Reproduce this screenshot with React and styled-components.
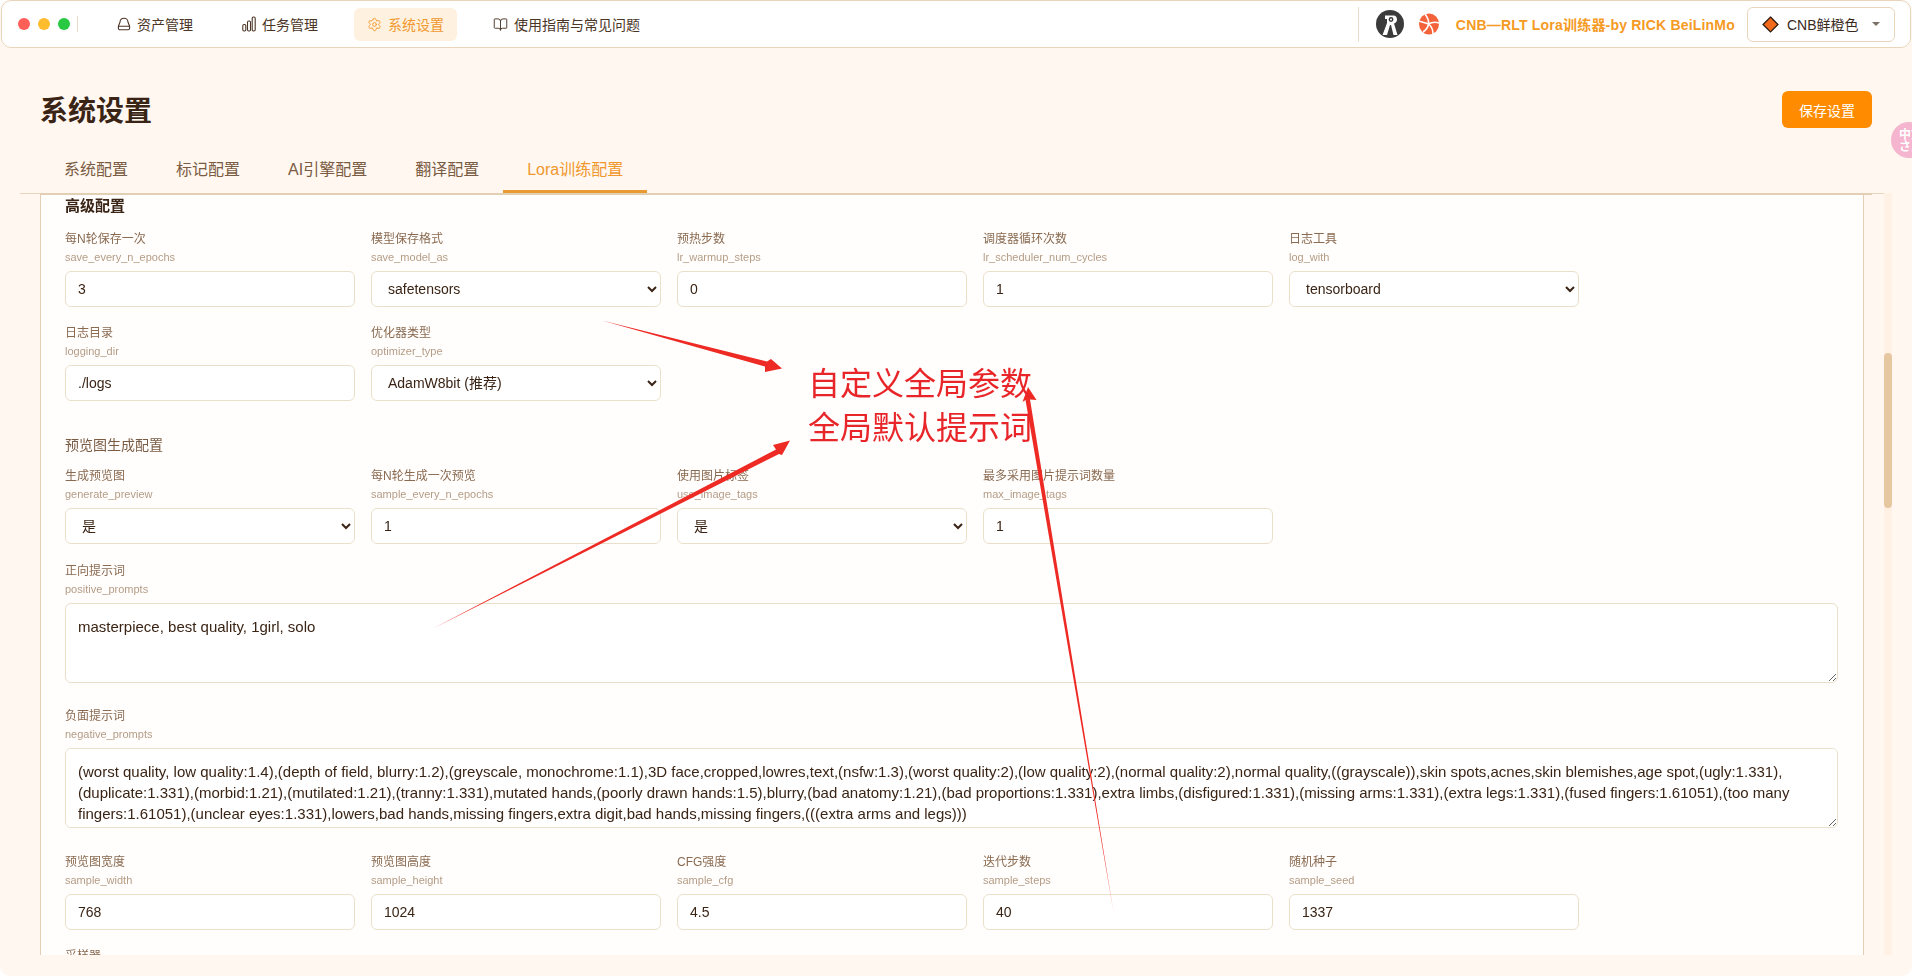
import React from 'react'
import styled, { createGlobalStyle } from 'styled-components'
import { Settings, BookOpen } from 'lucide-react'

const FONT = `"Liberation Sans", "Noto Sans CJK SC", sans-serif`

const NEGATIVE =
  '(worst quality, low quality:1.4),(depth of field, blurry:1.2),(greyscale, monochrome:1.1),3D face,cropped,lowres,text,(nsfw:1.3),(worst quality:2),(low quality:2),(normal quality:2),normal quality,((grayscale)),skin spots,acnes,skin blemishes,age spot,(ugly:1.331),(duplicate:1.331),(morbid:1.21),(mutilated:1.21),(tranny:1.331),mutated hands,(poorly drawn hands:1.5),blurry,(bad anatomy:1.21),(bad proportions:1.331),extra limbs,(disfigured:1.331),(missing arms:1.331),(extra legs:1.331),(fused fingers:1.61051),(too many fingers:1.61051),(unclear eyes:1.331),lowers,bad hands,missing fingers,extra digit,bad hands,missing fingers,(((extra arms and legs)))'

function DriveIcon() {
  return (
    <svg width="14" height="14" viewBox="0 0 14 14" fill="none" stroke="currentColor" strokeWidth="1.1">
      <path d="M3 5.2C3 2.8 4.4 1.2 6.9 1.2S11 2.8 11 5.2L12.6 9.2V11.2C12.6 12.1 12 12.7 11.1 12.7H2.9C2 12.7 1.4 12.1 1.4 11.2V9.2Z" />
      <path d="M1.4 9.2H12.6" />
    </svg>
  )
}

function BarsIcon() {
  return (
    <svg width="14" height="16" viewBox="0 0 14 16" fill="none" stroke="currentColor" strokeWidth="1.1">
      <rect x="0.8" y="8.5" width="3" height="6.5" rx="1.2" />
      <rect x="5.5" y="5" width="3" height="10" rx="1.2" />
      <rect x="10.2" y="1" width="3" height="14" rx="1.2" />
    </svg>
  )
}

function AvatarLogo() {
  return (
    <svg width="28" height="28" viewBox="0 0 28 28">
      <circle cx="14" cy="14" r="14" fill="#3b3b3b" />
      <path d="M9 5.5H17.5C20 5.5 21 7.5 21 9.5C21 11.5 19.8 13 18 13.5L21.5 25H17.5L15 15H14L11 25H6.5L11 13V9H9Z" fill="#fff" />
      <circle cx="15" cy="9.5" r="2.4" fill="#3b3b3b" />
      <circle cx="15" cy="9.5" r="1" fill="#fff" />
    </svg>
  )
}

function PeelLogo() {
  return (
    <svg width="22" height="22" viewBox="0 0 22 22">
      <ellipse cx="11" cy="11" rx="10" ry="10.5" fill="#f4623a" />
      <g fill="none" stroke="#fff" strokeWidth="1.6">
        <path d="M7 1C10 5 11 8 10.5 11C10 14 8 17 5 19" />
        <path d="M10.5 11C14 9 18 9 21 10" />
        <path d="M10.5 11C13 13 15 17 15 21" />
        <path d="M1 8C4 9 8 10 10.5 11" />
      </g>
    </svg>
  )
}

function DiamondIcon() {
  return (
    <svg width="17" height="17" viewBox="0 0 16 16">
      <path d="M8 1L15 8L8 15L1 8Z" fill="#f26a1b" stroke="#2a1a10" strokeWidth="1.2" />
    </svg>
  )
}

function Arrows() {
  return (
    <ArrowLayer width="1912" height="976" viewBox="0 0 1912 976">
      <path d="M602 320.5L767 361.5L771 359 782 368.5 765 372 765 366.5Z" fill="#ee2a24" />
      <path d="M433 628.5L776 449.5L773 445 790 440.5 782 455 779 454Z" fill="#ee2a24" />
      <path d="M1113.5 912L1025.5 400L1022.5 402 1028 387 1036.5 400 1030 399.5Z" fill="#ee2a24" />
    </ArrowLayer>
  )
}

function Field({ label, name, value, options }) {
  return (
    <FieldBox>
      <Label>{label}</Label>
      <SubLabel>{name}</SubLabel>
      {options ? (
        <SelectBox defaultValue={value}>
          {options.map((o) => (
            <option key={o}>{o}</option>
          ))}
        </SelectBox>
      ) : (
        <InputBox defaultValue={value} />
      )}
    </FieldBox>
  )
}

function AreaField({ label, name, value, top = 0, bottom = 24 }) {
  return (
    <AreaBox $top={top} $bottom={bottom}>
      <Label>{label}</Label>
      <SubLabel>{name}</SubLabel>
      <TextArea defaultValue={value} />
    </AreaBox>
  )
}

const YES_NO = ['是', '否']

export default function App() {
  return (
    <Window>
      <GlobalStyle />
      <Header>
        <Lights>
          <Light $color="#ff5f57" />
          <Light $color="#febc2e" />
          <Light $color="#28c840" />
          <LightDivider />
        </Lights>
        <Nav>
          <NavItem>
            <DriveIcon />
            资产管理
          </NavItem>
          <NavItem>
            <BarsIcon />
            任务管理
          </NavItem>
          <NavItem $active>
            <Settings size={15} strokeWidth={1.5} />
            系统设置
          </NavItem>
          <NavItem>
            <BookOpen size={15} strokeWidth={1.5} />
            使用指南与常见问题
          </NavItem>
        </Nav>
        <HeaderRight>
          <AvatarLogo />
          <PeelLogo />
          <Brand>CNB—RLT Lora训练器-by RICK BeiLinMo</Brand>
          <ThemeButton>
            <DiamondIcon />
            <span>CNB鲜橙色</span>
            <Caret />
          </ThemeButton>
        </HeaderRight>
      </Header>

      <PageHead>
        <Title>系统设置</Title>
        <SaveButton>保存设置</SaveButton>
      </PageHead>

      <Tabs>
        <Tab>系统配置</Tab>
        <Tab>标记配置</Tab>
        <Tab>AI引擎配置</Tab>
        <Tab>翻译配置</Tab>
        <Tab $active>Lora训练配置</Tab>
      </Tabs>

      <Body>
        <Column>
          <Card>
            <SectionTitle>高级配置</SectionTitle>
            <FieldRow>
              <Field label="每N轮保存一次" name="save_every_n_epochs" value="3" />
              <Field label="模型保存格式" name="save_model_as" value="safetensors" options={['safetensors', 'ckpt']} />
              <Field label="预热步数" name="lr_warmup_steps" value="0" />
              <Field label="调度器循环次数" name="lr_scheduler_num_cycles" value="1" />
              <Field label="日志工具" name="log_with" value="tensorboard" options={['tensorboard', 'wandb']} />
              <Field label="日志目录" name="logging_dir" value="./logs" />
              <Field label="优化器类型" name="optimizer_type" value="AdamW8bit (推荐)" options={['AdamW8bit (推荐)', 'AdamW']} />
            </FieldRow>
            <GroupTitle>预览图生成配置</GroupTitle>
            <FieldRow>
              <Field label="生成预览图" name="generate_preview" value="是" options={YES_NO} />
              <Field label="每N轮生成一次预览" name="sample_every_n_epochs" value="1" />
              <Field label="使用图片标签" name="use_image_tags" value="是" options={YES_NO} />
              <Field label="最多采用图片提示词数量" name="max_image_tags" value="1" />
            </FieldRow>
            <AreaField label="正向提示词" name="positive_prompts" value="masterpiece, best quality, 1girl, solo" top={1} />
            <AreaField label="负面提示词" name="negative_prompts" value={NEGATIVE} bottom={25} />
            <FieldRow>
              <Field label="预览图宽度" name="sample_width" value="768" />
              <Field label="预览图高度" name="sample_height" value="1024" />
              <Field label="CFG强度" name="sample_cfg" value="4.5" />
              <Field label="迭代步数" name="sample_steps" value="40" />
              <Field label="随机种子" name="sample_seed" value="1337" />
              <Field label="采样器" name="sampler" value="euler_a" options={['euler_a']} />
            </FieldRow>
          </Card>
        </Column>
        <ScrollTrack>
          <ScrollThumb />
        </ScrollTrack>
      </Body>

      <TranslateBall>
        中文
        <br />
        さん
      </TranslateBall>
      <Arrows />
      <Note>
        自定义全局参数
        <br />
        全局默认提示词
      </Note>
    </Window>
  )
}

const GlobalStyle = createGlobalStyle`
  html, body {
    margin: 0;
    padding: 0;
    height: 100%;
    overflow: hidden;
    background: #ffffff;
  }
  * {
    box-sizing: border-box;
  }
`
const Window = styled.div`
  position: relative;
  display: flex;
  flex-direction: column;
  width: 100%;
  height: 100vh;
  overflow: hidden;
  background: #fff7f0;
  border-radius: 10px;
  font-family: ${FONT};
`
const Header = styled.header`
  display: flex;
  align-items: center;
  flex: none;
  height: 48px;
  margin: 0 1px;
  background: #ffffff;
  border: 1px solid #e8d5bb;
  border-radius: 10px;
  padding: 0 15px 0 16px;
`
const Lights = styled.div`
  display: flex;
  align-items: center;
  gap: 8px;
`
const Light = styled.span`
  width: 12px;
  height: 12px;
  border-radius: 50%;
  background: ${(p) => p.$color};
`
const LightDivider = styled.span`
  width: 1px;
  height: 16px;
  margin-left: -1px;
  background: #eadcc8;
`
const Nav = styled.nav`
  display: flex;
  align-items: center;
  gap: 25px;
  margin-left: 26px;
`
const NavItem = styled.div`
  display: flex;
  align-items: center;
  gap: 6px;
  height: 33px;
  padding: 0 ${(p) => (p.$active ? 13 : 11)}px 0 13px;
  margin-right: ${(p) => (p.$active ? -2 : 0)}px;
  border-radius: 6px;
  font-size: 14px;
  color: ${(p) => (p.$active ? '#f0982e' : '#4a3526')};
  background: ${(p) => (p.$active ? '#fff1e0' : 'transparent')};
`
const HeaderRight = styled.div`
  display: flex;
  align-items: center;
  margin-left: auto;
  height: 35px;
  padding-left: 17px;
  border-left: 1px solid #eadcc8;
  svg:nth-child(2) {
    margin-left: 14px;
  }
`
const Brand = styled.div`
  margin-left: 16px;
  font-size: 14px;
  font-weight: 700;
  letter-spacing: 0.2px;
  color: #f59a23;
  white-space: nowrap;
`
const ThemeButton = styled.div`
  display: flex;
  align-items: center;
  width: 148px;
  height: 35px;
  margin-left: 12px;
  padding-left: 14px;
  border: 1px solid #e8d5bb;
  border-radius: 6px;
  font-size: 14px;
  color: #3a2a1e;
  span {
    margin-left: 8px;
  }
`
const Caret = styled.i`
  margin-left: 13px;
  border-left: 4px solid transparent;
  border-right: 4px solid transparent;
  border-top: 4px solid #7d7066;
`
const PageHead = styled.div`
  display: flex;
  align-items: flex-start;
  justify-content: space-between;
  flex: none;
  padding: 43px 40px 0;
`
const Title = styled.h1`
  margin: 0;
  font-size: 28px;
  font-weight: 700;
  line-height: 41px;
  color: #3a2415;
`
const SaveButton = styled.button`
  width: 90px;
  height: 37px;
  padding: 0;
  border: none;
  border-radius: 6px;
  background: #ff8c00;
  color: #ffffff;
  font-family: ${FONT};
  font-size: 14px;
`
const Tabs = styled.div`
  display: flex;
  flex: none;
  height: 62px;
  margin: 0 20px;
  padding: 15px 0 0 20px;
  border-bottom: 1px solid #e8d5bb;
`
const Tab = styled.div`
  height: 46px;
  padding: 0 24px;
  line-height: 46px;
  font-size: 16px;
  color: ${(p) => (p.$active ? '#f0982e' : '#7a5b43')};
  border-bottom: 3px solid ${(p) => (p.$active ? '#e89a35' : 'transparent')};
`
const Body = styled.div`
  display: flex;
  height: 762px;
  flex: none;
  padding: 0 20px 0 40px;
  margin-top: -1px;
`
const Column = styled.div`
  flex: 1;
  min-width: 0;
  overflow: hidden;
  border-top: 2px solid #e3cfb3;
`
const Card = styled.section`
  width: 1824px;
  min-height: 100%;
  padding: 1px 25px 0 24px;
  background: #fffefd;
  border-left: 1px solid #e3cfb3;
  border-right: 1px solid #e3cfb3;
`
const SectionTitle = styled.h3`
  margin: 0 0 14px;
  font-size: 15px;
  line-height: 20px;
  font-weight: 700;
  color: #3a2415;
`
const GroupTitle = styled.h4`
  margin: 17px 0 12px;
  font-size: 14px;
  line-height: 20px;
  font-weight: 400;
  color: #7a5b43;
`
const FieldRow = styled.div`
  display: grid;
  grid-template-columns: repeat(5, 290px);
  column-gap: 16px;
`
const FieldBox = styled.div`
  margin-bottom: 17px;
`
const AreaBox = styled.div`
  margin-top: ${(p) => p.$top}px;
  margin-bottom: ${(p) => p.$bottom}px;
`
const Label = styled.div`
  font-size: 12px;
  line-height: 18px;
  color: #8a6a50;
  white-space: nowrap;
`
const SubLabel = styled.div`
  margin-bottom: 5px;
  font-size: 11px;
  line-height: 18px;
  color: #b59c85;
`
const InputBox = styled.input`
  display: block;
  width: 100%;
  height: 36px;
  padding: 0 12px;
  background: #ffffff;
  border: 1px solid #eadfc8;
  border-radius: 6px;
  outline: none;
  font-family: ${FONT};
  font-size: 14px;
  color: #3a2415;
`
const SelectBox = styled.select`
  display: block;
  width: 100%;
  height: 36px;
  padding: 0 8px 0 12px;
  background: #ffffff;
  border: 1px solid #eadfc8;
  border-radius: 6px;
  outline: none;
  font-family: ${FONT};
  font-size: 14px;
  color: #3a2415;
`
const TextArea = styled.textarea`
  display: block;
  width: 100%;
  height: 80px;
  padding: 12px;
  background: #ffffff;
  border: 1px solid #eadfc8;
  border-radius: 6px;
  outline: none;
  font-family: ${FONT};
  font-size: 15px;
  line-height: 21px;
  color: #3a2415;
`
const ScrollTrack = styled.div`
  flex: none;
  width: 8px;
  margin-left: 12px;
  padding-top: 160px;
  background: #fff1e3;
`
const ScrollThumb = styled.div`
  width: 8px;
  height: 155px;
  border-radius: 4px;
  background: #e6c7a0;
`
const TranslateBall = styled.div`
  position: absolute;
  top: 122px;
  left: 1891px;
  width: 36px;
  height: 36px;
  padding: 7px 0 0 8px;
  border-radius: 50%;
  background: #f5b5cf;
  color: #ffffff;
  font-size: 12px;
  font-weight: 700;
  line-height: 12px;
  white-space: nowrap;
`
const ArrowLayer = styled.svg`
  position: absolute;
  top: 0;
  left: 0;
  pointer-events: none;
`
const Note = styled.div`
  position: absolute;
  top: 363px;
  left: 808px;
  font-size: 32px;
  line-height: 43.5px;
  color: #e8262a;
  white-space: nowrap;
`
